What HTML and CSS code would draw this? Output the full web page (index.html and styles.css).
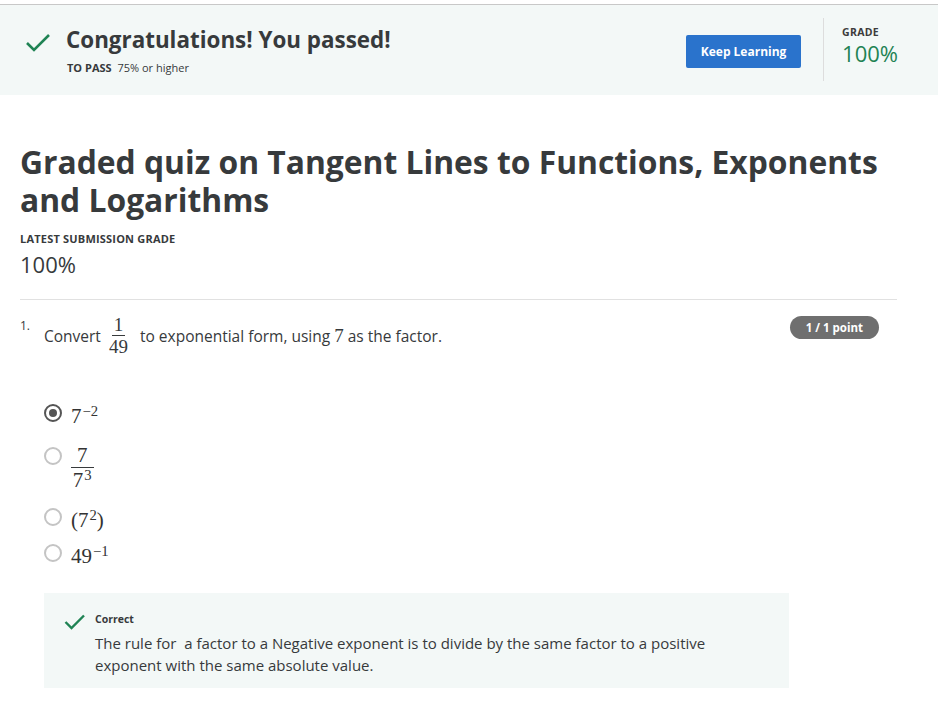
FILE: index.html
```html
<!DOCTYPE html>
<html>
<head>
<meta charset="utf-8">
<link rel="stylesheet" href="styles.css">
</head>
<body>
<div class="topline"></div>
<header class="banner">
  <div class="banner-left">
    <svg class="check-big" width="26" height="20" viewBox="0 0 26 20"><path d="M2 10 L9 17 L24 2" fill="none" stroke="#1f8354" stroke-width="2.6"/></svg>
    <div>
      <h1 class="congrats">Congratulations! You passed!</h1>
      <div class="topass"><b>TO PASS</b> 75% or higher</div>
    </div>
  </div>
  <div class="banner-right">
    <button class="keep">Keep Learning</button>
    <div class="vdivider"></div>
    <div class="grade">
      <div class="grade-label">GRADE</div>
      <div class="grade-value">100%</div>
    </div>
  </div>
</header>

<main class="content">
  <h2 class="title">Graded quiz on Tangent Lines to Functions, Exponents and Logarithms</h2>
  <div class="latest-label">LATEST SUBMISSION GRADE</div>
  <div class="latest-value">100%</div>
  <hr class="sep">

  <section class="question">
    <div class="qnum">1.</div>
    <div class="qbody">
      <div class="qhead">
        <p class="qtext">Convert <span class="frac"><span class="num">1</span><span class="den">49</span></span> to exponential form, using <span class="m">7</span> as the factor.</p>
        <span class="badge">1 / 1 point</span>
      </div>
      <ul class="options">
        <li class="opt"><span class="radio checked"></span><span class="m">7<sup>−2</sup></span></li>
        <li class="opt opt-frac"><span class="radio"></span><span class="frac big"><span class="num">7</span><span class="den">7<sup>3</sup></span></span></li>
        <li class="opt"><span class="radio"></span><span class="m">(7<sup>2</sup>)</span></li>
        <li class="opt"><span class="radio"></span><span class="m">49<sup>−1</sup></span></li>
      </ul>
      <div class="feedback">
        <svg class="check-small" width="22" height="16" viewBox="0 0 22 16"><path d="M1.5 8 L7.5 14 L20 1.5" fill="none" stroke="#1f8354" stroke-width="2.4"/></svg>
        <div>
          <div class="fb-label">Correct</div>
          <p class="fb-text">The rule for&nbsp; a factor to a Negative exponent is to divide by the same factor to a positive exponent with the same absolute value.</p>
        </div>
      </div>
    </div>
  </section>
</main>
</body>
</html>
```

FILE: styles.css
```css
* { box-sizing: border-box; }
html, body { margin: 0; padding: 0; background: #fff; }
body {
  font-family: "Open Sans", "Liberation Sans", sans-serif;
  color: #373a3c;
  width: 938px;
}
.topline { height: 5px; border-bottom: 1px solid #c8c8c8; background: #fff; }
.banner {
  background: #f3f8f7;
  height: 90px;
  display: flex;
  justify-content: space-between;
  padding: 0 40px 0 25px;
}
.banner-left { display: flex; align-items: flex-start; padding-top: 19px; }
.check-big { margin-top: 9px; margin-right: 15px; }
.congrats {
  margin: 0;
  font-size: 22.4px;
  font-weight: 700;
  line-height: 32px;
  color: #373a3c;
}
.topass { font-size: 11px; margin-top: 4px; margin-left: 1px; color: #373a3c; }
.topass b { margin-right: 3px; }
.banner-right { display: flex; align-items: center; }
.keep {
  background: #2a73cc;
  color: #fff;
  border: none;
  border-radius: 2px;
  font-family: "Open Sans", sans-serif;
  font-weight: 700;
  font-size: 12px;
  width: 115px;
  height: 33px;
  margin-top: 2px;
}
.vdivider { width: 1px; background: #ddd; height: 63px; margin: 0 18px 0 22px; margin-top: -2px; }
.grade { margin-top: -8px; }
.grade-label { font-size: 10.5px; font-weight: 700; letter-spacing: 0.3px; color: #3c3c3c; line-height: 14px; }
.grade-value { font-size: 22px; color: #1f8354; line-height: 28px; margin-top: 0; }

.content { padding: 0 41px 0 20px; }
.title {
  margin: 48px 0 0;
  font-size: 31.8px;
  line-height: 38px;
  font-weight: 700;
  color: #373a3c;
}
.latest-label { margin-top: 12px; font-size: 11px; font-weight: 700; letter-spacing: 0.2px; }
.latest-value { font-size: 22px; margin-top: 3px; line-height: 30px; color: #373a3c; }
.sep { border: none; border-top: 1px solid #e1e1e1; margin: 20px 0 0; }

.question { display: flex; padding-top: 16px; }
.qnum { width: 24px; font-size: 12px; padding-top: 1px; }
.qbody { flex: 1; }
.qhead { display: flex; justify-content: space-between; align-items: flex-start; padding-right: 18px; }
.qtext { margin: 0; font-size: 15.5px; line-height: 20px; padding-top: 10px; }
.m { font-family: "Liberation Serif", "DejaVu Serif", serif; font-size: 19px; line-height: 0; }
.frac {
  display: inline-flex;
  flex-direction: column;
  align-items: center;
  vertical-align: middle;
  font-family: "Liberation Serif", "DejaVu Serif", serif;
  font-size: 19px;
  line-height: 19px;
  margin: -14px 7px -12px 3px;
  position: relative;
  top: -1px;
}
.frac .num { border-bottom: 1.5px solid #373a3c; padding: 0 2px 1px; }
.frac .den { padding: 1px 1px 0; }
sup { font-size: 0.7em; vertical-align: 0.45em; line-height: 0; margin-left: 1px; }
.badge {
  background: #6f6f6f;
  color: #fff;
  font-size: 11.5px;
  font-weight: 700;
  border-radius: 12px;
  padding: 0 16px;
  height: 23px;
  line-height: 23px;
}
.options { list-style: none; margin: 49px 0 0; padding: 0; }
.opt { display: flex; align-items: center; height: 36px; }
.opt-frac { height: 68px; align-items: flex-start; }
.opt-frac .radio { margin-top: 16px; }
.opt .m, .opt .frac { margin-left: 9px; color: #333; font-size: 21px; }
.opt .frac { margin-top: 14px; margin-bottom: 0; top: 0; line-height: 20px; }
.opt .frac .num { padding: 0 6px 2px; }
.opt .frac .den { padding-top: 2px; }
.radio {
  width: 18px; height: 18px; border-radius: 50%;
  border: 2px solid #c4c4c4;
  display: inline-block;
  flex: none;
  position: relative;
  background: #fff;
}
.radio.checked { border: 2px solid #555; }
.radio.checked::after {
  content: ""; position: absolute; left: 3px; top: 3px; width: 8px; height: 8px; border-radius: 50%; background: #555;
}
.feedback {
  margin-top: 22px;
  background: #f3f8f7;
  width: 745px;
  display: flex;
  padding: 19px 44px 12px 20px;
}
.check-small { margin-top: 2px; margin-right: 9px; flex: none; }
.fb-label { font-size: 10.5px; font-weight: 700; line-height: 14px; }
.fb-text { margin: 6px 0 0; font-size: 15px; line-height: 22px; color: #373a3c; }
```
